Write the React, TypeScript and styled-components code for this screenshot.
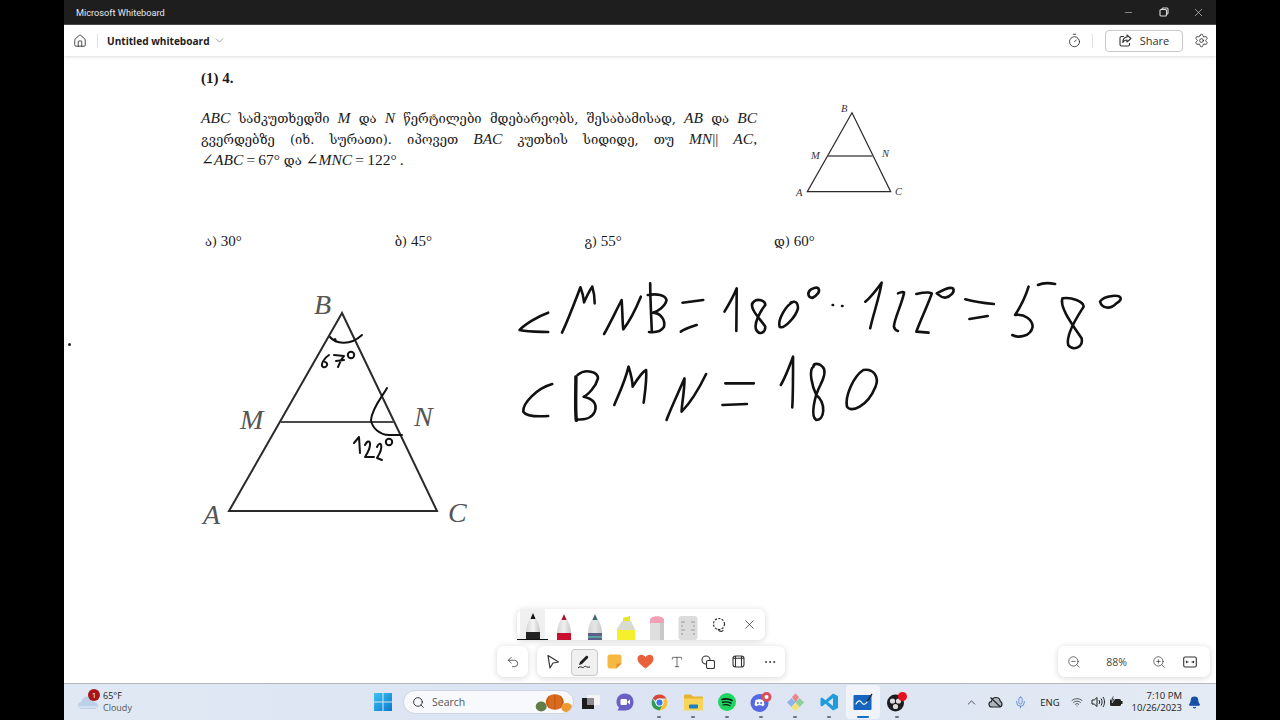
import React from 'react'
import styled, { createGlobalStyle } from 'styled-components'
import {
  Home,
  ChevronDown,
  ChevronUp,
  Timer,
  Settings,
  Minus,
  X,
  Undo2,
  Type,
  ZoomIn,
  ZoomOut,
  Ellipsis,
  Search,
  Mic,
  Wifi,
  Bell,
} from 'lucide-react'

const UI_FONT = `"Open Sans", "Noto Sans", sans-serif`
const BOOK_FONT = `"Liberation Serif", "DejaVu Serif", serif`

const GlobalStyle = createGlobalStyle`
  html, body {
    margin: 0;
    padding: 0;
    width: 1280px;
    height: 720px;
    overflow: hidden;
    background: #000;
  }
  * { box-sizing: border-box; }
`

const Desktop = styled.div`
  width: 1280px;
  height: 720px;
  display: flex;
  justify-content: center;
  background: #000;
`

const Screen = styled.div`
  width: 1152px;
  height: 720px;
  display: flex;
  flex-direction: column;
  font-family: ${UI_FONT};
  background: #fff;
`

const TitleBar = styled.div`
  height: 25px;
  flex: none;
  display: flex;
  align-items: center;
  padding-left: 12px;
  background: #1e1e1e;
  border-bottom: 1px solid #4a4a4a;
  color: #e8e8e8;
  font-family: Roboto, sans-serif;
  font-size: 9.2px;
`

const WindowControls = styled.div`
  margin-left: auto;
  display: flex;
  color: #dcdcdc;
`

const WindowButton = styled.div`
  width: 35px;
  height: 24px;
  display: flex;
  align-items: center;
  justify-content: center;
`

const AppBar = styled.div`
  height: 31px;
  flex: none;
  display: flex;
  align-items: center;
  padding-left: 9px;
  background: #fff;
  box-shadow: 0 1px 3px rgba(0, 0, 0, 0.14);
  position: relative;
  z-index: 2;
  color: #222;
`

const Divider = styled.div`
  width: 1px;
  height: 14px;
  margin-left: 10px;
  background: #e0e0e0;
`

const DocTitle = styled.div`
  margin-left: 9px;
  margin-right: 3px;
  font-size: 10.1px;
  font-weight: 700;
  color: #1c1c1c;
`

const BarRight = styled.div`
  margin-left: auto;
  display: flex;
  align-items: center;
  padding-right: 7px;
`

const ShareButton = styled.div`
  width: 78px;
  height: 22px;
  margin: 0 11px 0 12px;
  display: flex;
  align-items: center;
  justify-content: center;
  gap: 8px;
  border: 1px solid #c9c9c9;
  border-radius: 4px;
  font-size: 11px;
  color: #333;
`

const Canvas = styled.div`
  flex: 1;
  position: relative;
  background: #fff;
  overflow: hidden;
`

const QuestionImage = styled.div`
  position: absolute;
  left: 137px;
  top: 13px;
  width: 700px;
  font-family: ${BOOK_FONT};
  color: #1a1a1a;
`

const QuestionNumber = styled.div`
  font-size: 15px;
  font-weight: 700;
  line-height: 18px;
`

const QuestionText = styled.div`
  margin-top: 20px;
  width: 556px;
  font-size: 15.5px;
`

const TextLine = styled.div<{ $justify?: boolean }>`
  height: 21px;
  line-height: 21px;
  white-space: nowrap;
  text-align-last: ${(p) => (p.$justify ? 'justify' : 'left')};
`

const Var = styled.i`
  font-family: "Liberation Serif", serif;
  font-size: 15.5px;
`

const Geo = styled.span`
  font-family: "DejaVu Serif", "DejaVu Sans", "Noto Sans", serif;
  font-size: 13px;
`

const AnswerRow = styled.div`
  margin-top: 61px;
  margin-left: 4px;
  display: grid;
  grid-template-columns: repeat(4, 189.7px);
  font-size: 15px;
  line-height: 20px;
`

const InkLayer = styled.svg<{ $x: number; $y: number }>`
  position: absolute;
  left: ${(p) => p.$x}px;
  top: ${(p) => p.$y}px;
  overflow: visible;
`

const CursorDot = styled.div`
  position: absolute;
  left: 4px;
  top: 287px;
  width: 3px;
  height: 3px;
  border-radius: 50%;
  background: #222;
`

const FloatBar = styled.div<{ $left: number; $top: number; $width: number }>`
  position: absolute;
  left: ${(p) => p.$left}px;
  top: ${(p) => p.$top}px;
  width: ${(p) => p.$width}px;
  height: 31px;
  display: flex;
  align-items: center;
  background: #fff;
  border-radius: 7px;
  box-shadow: 0 1px 6px rgba(0, 0, 0, 0.16);
  color: #333;
`

const ToolCell = styled.div<{ $active?: boolean }>`
  width: 31px;
  height: 100%;
  flex: none;
  display: flex;
  align-items: center;
  justify-content: center;
  position: relative;

  ${(p) =>
    p.$active &&
    `
    &::before {
      content: '';
      position: absolute;
      left: 3px;
      top: 3px;
      width: 25px;
      height: 25px;
      background: #f0f0f0;
      border: 1px solid #c8c8c8;
      border-radius: 4px;
    }
    svg { position: relative; }
  `}
`

const PenCell = styled.div<{ $active?: boolean }>`
  width: 31px;
  height: 100%;
  flex: none;
  display: flex;
  align-items: flex-end;
  justify-content: center;
  overflow: hidden;
  position: relative;
  background: ${(p) => (p.$active ? 'linear-gradient(90deg, transparent 3px, #f0f0f0 3px, #f0f0f0 28px, transparent 28px)' : 'none')};
  border-bottom: ${(p) => (p.$active ? '1px solid #111' : 'none')};
`

const ZoomText = styled.div`
  width: 51px;
  text-align: center;
  font-size: 10.5px;
  color: #444;
`

const ZoomBarInner = styled.div`
  width: 100%;
  display: flex;
  align-items: center;
  gap: 10px;
  padding-left: 9px;
`

const FitSlot = styled.div`
  margin-left: 7px;
  display: flex;
`

const Taskbar = styled.div`
  height: 37px;
  flex: none;
  display: flex;
  align-items: center;
  background: linear-gradient(90deg, #e0e9f3 0%, #dce3f3 45%, #dee6f3 75%, #e4ebf4 100%);
  border-top: 1px solid #b4b8bd;
  color: #222;
`

const Weather = styled.div`
  width: 302px;
  flex: none;
  height: 100%;
  display: flex;
  align-items: center;
  padding-left: 14px;
  gap: 5px;
`

const WeatherIcon = styled.div`
  width: 20px;
  height: 24px;
  position: relative;
  display: flex;
  align-items: center;
`

const Badge = styled.div`
  position: absolute;
  right: -2px;
  top: -1px;
  width: 12px;
  height: 12px;
  border-radius: 50%;
  background: #a8141c;
  color: #fff;
  font-size: 8px;
  line-height: 12px;
  text-align: center;
`

const WeatherText = styled.div`
  font-size: 9px;
  line-height: 12.5px;
  color: #222;

  span {
    display: block;
    color: #555;
  }
`

const TaskCell = styled.div<{ $active?: boolean }>`
  width: 34px;
  height: 34px;
  flex: none;
  display: flex;
  align-items: center;
  justify-content: center;
  position: relative;
  border-radius: 4px;
  background: ${(p) => (p.$active ? 'rgba(255,255,255,0.55)' : 'none')};
`

const RunDot = styled.div<{ $active?: boolean }>`
  position: absolute;
  bottom: 1px;
  left: 50%;
  width: ${(p) => (p.$active ? 12 : 4)}px;
  height: 2px;
  margin-left: ${(p) => (p.$active ? -6 : -2)}px;
  border-radius: 1px;
  background: ${(p) => (p.$active ? '#1a6fc0' : '#6d7480')};
`

const SearchBox = styled.div`
  width: 171px;
  height: 24px;
  margin-left: 3px;
  flex: none;
  display: flex;
  align-items: center;
  gap: 7px;
  padding-left: 8px;
  background: #f7f9fc;
  border-radius: 12px;
  border: 1px solid #cfd5dd;
  font-size: 10.5px;
  color: #555;
  position: relative;
  overflow: hidden;
`

const SearchArt = styled.svg`
  position: absolute;
  right: 0;
  top: 0;
`

const Tray = styled.div`
  margin-left: auto;
  display: flex;
  align-items: center;
  padding-right: 12px;
  height: 100%;
`

const TrayCell = styled.div<{ $w: number }>`
  width: ${(p) => p.$w}px;
  flex: none;
  display: flex;
  align-items: center;
  justify-content: center;
  font-size: 9.5px;
  color: #222;
`

const Clock = styled.div`
  width: 59px;
  flex: none;
  text-align: right;
  font-size: 9.5px;
  line-height: 12.5px;
  color: #222;
  margin-right: 2px;
`

const strokeProps = {
  fill: 'none',
  stroke: '#111',
  strokeLinecap: 'round' as const,
  strokeLinejoin: 'round' as const,
}

const BookTriangle = () => (
  <InkLayer $x={128} $y={224} width={290} height={250} viewBox="0 0 290 250">
    <g fill="none" stroke="#2a2a2a" strokeWidth={2}>
      <path d="M150 33 L37 231 H245 Z" strokeLinejoin="miter" />
      <path d="M89 142 H202" stroke="#4a4a4a" strokeWidth={2.2} />
    </g>
    <g fontFamily="Liberation Serif, serif" fontStyle="italic" fontSize={28} fill="#555">
      <text x={122} y={34}>B</text>
      <text x={48} y={149}>M</text>
      <text x={222} y={146}>N</text>
      <text x={11} y={244}>A</text>
      <text x={256} y={242}>C</text>
    </g>
    <g {...strokeProps} strokeWidth={2}>
      <path d="M138 57 C143 63 157 67 170 55" />
      <path d="M143 59 L143.5 59.5" />
      <path d="M137 75 C132 78 128 85 131 87 C135 88 137 83 133 82" />
      <path d="M142 75 L152 76 C148 80 147 85 146 87 M144 81 L152 80" />
      <circle cx={159} cy={75} r={3.2} />
      <path d="M195 108 C190 117 180 128 179 140 C180 148 188 155 197 155 L210 155" />
      <path d="M162 163 L167 157 L168 173" />
      <path d="M173 165 C177 157 182 163 173 177 L182 177" />
      <path d="M185 167 C188 160 193 165 185 178 L190 180" />
      <circle cx={197} cy={162} r={3.2} />
    </g>
  </InkLayer>
)

const SmallTriangle = () => (
  <InkLayer $x={728} $y={44} width={120} height={100} viewBox="0 0 120 100">
    <g fill="none" stroke="#2a2a2a" strokeWidth={1.2}>
      <path d="M60 12.7 L15.3 91.7 H98.7 Z" />
      <path d="M36 56 H80.7" stroke="#555" strokeWidth={1.4} />
    </g>
    <g fontFamily="Liberation Serif, serif" fontStyle="italic" fontSize={10.5} fill="#333">
      <text x={49} y={12}>B</text>
      <text x={19} y={59}>M</text>
      <text x={90} y={57}>N</text>
      <text x={4} y={96}>A</text>
      <text x={103} y={95}>C</text>
    </g>
  </InkLayer>
)

// the ink coords were read off a crop that is squeezed sideways, so the box stretches unevenly
const WorkingInk = () => (
  <InkLayer $x={436} $y={214} width={640} height={160} viewBox="0 0 1568 480" preserveAspectRatio="none">
    <g {...strokeProps} strokeWidth={2.6}>
      {[
        'M118 128 C90 140 60 165 48 180 C70 186 95 185 118 186',
        'M152 188 C170 140 185 90 197 52 C203 70 205 85 206 97 C212 80 220 60 226 50 C230 65 232 85 232 100',
        'M255 192 C270 160 285 120 298 90 C300 120 300 160 302 178 C320 150 335 110 345 80',
        'M368 40 C368 80 370 130 372 185 M362 75 C385 70 405 75 408 90 C405 110 385 125 375 128 C395 130 405 150 402 170 C395 185 380 188 365 186',
        'M447 98 L498 90 M443 185 C455 175 470 170 482 165',
        'M550 125 C560 105 575 70 580 55 L579 183',
        'M622 95 C605 110 640 150 650 170 C650 190 635 195 628 180 C620 160 640 120 650 105 C650 90 630 85 622 95',
        'M720 95 C700 105 680 150 685 170 C695 180 725 140 730 115 C730 95 722 92 712 98',
        'M760 60 C752 70 755 82 765 84 C778 75 785 65 780 55 C775 50 765 55 760 60',
        'M815 105 L816 105 M838 108 L839 108',
        'M895 95 C910 80 925 55 935 38 C930 80 915 130 907 175',
        'M975 70 C985 65 990 65 990 68 C985 100 965 150 965 170 C967 178 972 182 975 183',
        'M1020 72 C1035 68 1050 65 1058 70 C1050 100 1030 150 1020 185 L1050 188',
        'M1070 70 C1085 60 1100 50 1110 55 C1115 65 1105 80 1090 83 C1080 82 1075 75 1070 70',
        'M1140 88 C1160 95 1190 100 1210 102 M1150 147 L1195 138',
        'M1295 50 C1285 90 1270 120 1262 135 C1285 130 1305 150 1305 170 C1300 200 1270 205 1255 195 M1318 45 C1330 38 1345 38 1360 42',
        'M1378 85 C1370 110 1400 160 1425 205 C1430 230 1405 245 1392 225 C1385 190 1420 130 1430 110 C1430 95 1400 80 1378 85',
        'M1470 95 C1475 115 1495 120 1510 100 C1530 85 1520 75 1500 78 C1485 80 1475 85 1470 95',
        'M128 342 C90 355 55 400 57 425 C65 440 95 440 118 438',
        'M185 320 C185 360 183 420 186 452 M187 320 C187 360 185 420 188 452',
        'M190 315 C210 295 240 305 240 325 C235 350 215 375 205 380 C225 385 240 400 232 425 C225 445 205 450 188 448',
        'M280 405 C290 375 305 340 315 290 C320 310 325 330 325 350 C335 330 350 305 358 300 C360 330 355 370 352 398',
        'M408 450 C420 410 440 360 452 325 C452 370 445 400 445 425 C465 400 490 350 505 312',
        'M552 340 L622 340 M545 405 L605 402',
        'M688 345 C700 320 710 285 718 260 C718 320 718 380 716 412',
        'M768 290 C755 300 765 350 775 375 C800 400 795 450 775 450 C760 440 770 380 785 345 C795 320 800 300 790 290 C780 278 768 280 768 290',
        'M890 300 C865 320 845 380 850 410 C860 430 900 410 920 350 C930 320 915 295 890 300',
      ].map((d) => (
        <path key={d} d={d} vectorEffect="non-scaling-stroke" />
      ))}
    </g>
  </InkLayer>
)

const Pen = ({ tip, body, band, low }: { tip: string; body: string; band: string; low?: string }) => (
  <svg width={20} height={27} viewBox="0 0 20 27">
    <defs>
      <linearGradient id={`pen-${tip.slice(1)}`} x1="0" x2="1" y1="0" y2="0">
        <stop offset="0" stopColor="#d4d4d4" />
        <stop offset="0.5" stopColor={body} />
        <stop offset="1" stopColor="#c8c8c8" />
      </linearGradient>
    </defs>
    <path d="M10 2 C13 5 17 13 17 20 V27 H3 V20 C3 13 7 5 10 2 Z" fill={`url(#pen-${tip.slice(1)})`} />
    <path d="M10 1 L12.5 7 H7.5 Z" fill={tip} />
    <rect x={3} y={20} width={14} height={7} fill={band} />
    {low && <rect x={3} y={23} width={14} height={2} fill={low} />}
  </svg>
)

const Highlighter = () => (
  <svg width={20} height={27} viewBox="0 0 20 27">
    <path d="M7 5 L14 3 V8 H7 Z" fill="#e8e620" />
    <path d="M6 8 H15 L19 16 V27 H1 V16 Z" fill="#d8dcd0" />
    <rect x={1} y={17} width={18} height={10} fill="#f4f02c" />
  </svg>
)

const Eraser = () => (
  <svg width={16} height={27} viewBox="0 0 16 27">
    <path d="M1 7 C1 2 15 2 15 7 V10 H1 Z" fill="#f2a0b4" />
    <rect x={1} y={10} width={14} height={17} fill="#dedede" />
    <rect x={11} y={10} width={4} height={17} fill="#c8c8c8" />
  </svg>
)

const Ruler = () => (
  <svg width={20} height={24} viewBox="0 0 20 24">
    <rect x={0.5} y={0} width={19} height={24} rx={3} fill="#dcdcdc" />
    <path d="M3 6 H7 M3 10 H5 M3 14 H7 M3 18 H5 M17 6 H13 M17 10 H15 M17 14 H13 M17 18 H15" stroke="#999" strokeWidth={1} />
  </svg>
)

const Lasso = () => (
  <svg width={16} height={16} viewBox="0 0 16 16" fill="none" stroke="#333" strokeWidth={1.2}>
    <circle cx={8} cy={7} r={5.5} strokeDasharray="2.2 1.3" />
    <path d="M7 12 C8 15 12 15 12 13" />
  </svg>
)

const CursorIcon = () => (
  <svg width={14} height={15} viewBox="0 0 14 15" fill="none" stroke="#333" strokeWidth={1.2} strokeLinejoin="round">
    <path d="M2 1.5 L12.5 8 L7 9 L4 14 Z" />
  </svg>
)

const InkPenIcon = () => (
  <svg width={16} height={16} viewBox="0 0 16 16" fill="none">
    <path d="M3 11 L4 8 L10 2 C11 1 13 3 12 4 L6 10 Z" fill="#1c1c1c" />
    <path d="M2 14 C5 11 6 15 8 13 C10 11 10 14 14 13" stroke="#1c1c1c" strokeWidth={1} />
  </svg>
)

const NoteIcon = () => (
  <svg width={15} height={15} viewBox="0 0 15 15">
    <path d="M3 0.5 H12 C13.5 0.5 14.5 1.5 14.5 3 V9.5 L9.5 14.5 H3 C1.5 14.5 0.5 13.5 0.5 12 V3 C0.5 1.5 1.5 0.5 3 0.5 Z" fill="#f5b942" />
    <path d="M9.5 14.5 V11 C9.5 10 10 9.5 11 9.5 H14.5 Z" fill="#e58b3a" />
  </svg>
)

const HeartIcon = () => (
  <svg width={17} height={15} viewBox="0 0 17 15">
    <path d="M8.5 14.5 C4 11 0.5 8.5 0.5 4.8 C0.5 2.3 2.4 0.8 4.5 0.8 C6.2 0.8 7.6 1.7 8.5 3.2 C9.4 1.7 10.8 0.8 12.5 0.8 C14.6 0.8 16.5 2.3 16.5 4.8 C16.5 8.5 13 11 8.5 14.5 Z" fill="#e8603c" />
  </svg>
)

const ShapesIcon = () => (
  <svg width={14} height={14} viewBox="0 0 14 14" fill="none" stroke="#333" strokeWidth={1.1}>
    <circle cx={5} cy={5} r={4} />
    <rect x={5.5} y={5.5} width={8} height={8} rx={1.5} fill="#fff" />
  </svg>
)

const FrameIcon = () => (
  <svg width={13} height={13} viewBox="0 0 13 13" fill="none" stroke="#333" strokeWidth={1.1}>
    <rect x={1} y={1} width={11} height={11} rx={2.5} />
    <path d="M3.5 1 V12 M9.5 1 V12 M1 3.2 H12" />
  </svg>
)

const FitIcon = () => (
  <svg width={14} height={12} viewBox="0 0 14 12" fill="none" stroke="#333" strokeWidth={1.1}>
    <rect x={0.7} y={1} width={12.6} height={10} rx={1.5} />
    <path d="M3 6 H5.5 M3 6 L4 5 M3 6 L4 7 M11 6 H8.5 M11 6 L10 5 M11 6 L10 7" />
  </svg>
)

const RestoreIcon = () => (
  <svg width={10} height={10} viewBox="0 0 10 10" fill="none" stroke="#dcdcdc" strokeWidth={1.1}>
    <rect x={1} y={2.5} width={6.5} height={6.5} rx={1} />
    <path d="M3 2.5 V2 C3 1.3 3.4 1 4 1 H8 C8.6 1 9 1.4 9 2 V6 C9 6.6 8.7 7 8 7" />
  </svg>
)

const ShareIcon = () => (
  <svg width={13} height={13} viewBox="0 0 13 13" fill="none" stroke="#333" strokeWidth={1.1} strokeLinejoin="round">
    <path d="M5 2.5 H2.5 C1.7 2.5 1 3.2 1 4 V10.5 C1 11.3 1.7 12 2.5 12 H9 C9.8 12 10.5 11.3 10.5 10.5 V9" />
    <path d="M8 1 L12 4.5 L8 8 V6 C6 6 4.5 7 3.8 8.5 C3.8 5.5 5.5 3.3 8 3 Z" />
  </svg>
)

const CloudIcon = () => (
  <svg width={20} height={16} viewBox="0 0 20 16">
    <path d="M4 15 C1.5 15 0 13.5 0 11.5 C0 9.5 1.5 8.3 3.2 8 C3.8 4.5 6.5 2.5 9.5 2.5 C13 2.5 15.5 5 16 8 C18.3 8.3 20 9.8 20 11.8 C20 13.8 18.3 15 16.5 15 Z" fill="#bcd0e6" />
    <path d="M1 13 H19" stroke="#e9f0f8" strokeWidth={1} />
  </svg>
)

const WindowsLogo = () => (
  <svg width={18} height={18} viewBox="0 0 18 18">
    <defs>
      <linearGradient id="winblue" x1="0" y1="0" x2="1" y2="1">
        <stop offset="0" stopColor="#3cc4f0" />
        <stop offset="1" stopColor="#0a78d0" />
      </linearGradient>
    </defs>
    <path d="M0 0 H8.5 V8.5 H0 Z M9.5 0 H18 V8.5 H9.5 Z M0 9.5 H8.5 V18 H0 Z M9.5 9.5 H18 V18 H9.5 Z" fill="url(#winblue)" />
  </svg>
)

const PumpkinArt = () => (
  <SearchArt width={40} height={22} viewBox="0 0 44 22">
    <ellipse cx={9} cy={16} rx={6} ry={5.5} fill="#5f7d45" />
    <ellipse cx={24} cy={11} rx={10} ry={8.5} fill="#d96a1e" />
    <path d="M24 3 V19 M18 4 C15 9 15 14 18 18 M30 4 C33 9 33 14 30 18" stroke="#b44f12" strokeWidth={0.8} fill="none" />
    <ellipse cx={37} cy={17} rx={6} ry={5} fill="#eb9a32" />
  </SearchArt>
)

const StoreIcon = () => (
  <svg width={18} height={14} viewBox="0 0 18 14">
    <rect x={5} y={0} width={13} height={10} fill="#f4f4f4" />
    <rect x={0} y={3} width={12} height={11} fill="#1c1c1c" />
    <rect x={5} y={3} width={7} height={7} fill="#8d8d8d" />
  </svg>
)

const MeetIcon = () => (
  <svg width={18} height={18} viewBox="0 0 18 18">
    <path d="M9 0.5 C14 0.5 17.5 4 17.5 9 C17.5 14 14 17.5 9 17.5 H1.5 L3 14.5 C1.3 13 0.5 11 0.5 9 C0.5 4 4 0.5 9 0.5 Z" fill="#6a5fc4" />
    <rect x={4.5} y={6} width={6.5} height={6} rx={1.2} fill="#fff" />
    <path d="M11.5 8.5 L14 6.5 V11.5 L11.5 9.5 Z" fill="#fff" />
  </svg>
)

const ChromeIcon = () => (
  <svg width={19} height={19} viewBox="0 0 48 48">
    <path d="M24 4 A20 20 0 0 1 41.3 14 L24 14 A10 10 0 0 0 15 19.6 L6.7 14 A20 20 0 0 1 24 4 Z" fill="#db4437" />
    <path d="M41.3 14 A20 20 0 0 1 24 44 L32.7 29 A10 10 0 0 0 33 19 Z" fill="#fbc02d" />
    <path d="M24 44 A20 20 0 0 1 6.7 14 L15.3 29 A10 10 0 0 0 24 34 L32.7 29 Z" fill="#2e9d4f" />
    <circle cx={24} cy={24} r={10} fill="#fff" />
    <circle cx={24} cy={24} r={7.8} fill="#3b78e7" />
  </svg>
)

const FilesIcon = () => (
  <svg width={19} height={17} viewBox="0 0 19 17">
    <path d="M0 2 C0 1 0.6 0.5 1.5 0.5 H7 L9 2.5 H18 C18.6 2.5 19 3 19 3.5 V6 H0 Z" fill="#e5b431" />
    <path d="M0 4.5 H19 V15.5 C19 16.2 18.5 16.5 18 16.5 H1 C0.5 16.5 0 16.2 0 15.5 Z" fill="#f8d558" />
    <rect x={5} y={10.5} width={9} height={4} rx={1} fill="#1d7fc4" />
  </svg>
)

const SpotifyIcon = () => (
  <svg width={18} height={18} viewBox="0 0 18 18" fill="none">
    <circle cx={9} cy={9} r={9} fill="#1ed760" />
    <path d="M4 6.5 C7.5 5.5 11 5.8 14 7.5" stroke="#121212" strokeWidth={1.6} strokeLinecap="round" />
    <path d="M4.5 9.3 C7.5 8.5 10.5 8.8 13 10.2" stroke="#121212" strokeWidth={1.4} strokeLinecap="round" />
    <path d="M5 12 C7.5 11.3 10 11.6 12 12.8" stroke="#121212" strokeWidth={1.2} strokeLinecap="round" />
  </svg>
)

const DiscordIcon = () => (
  <svg width={22} height={20} viewBox="0 0 22 20">
    <circle cx={9.5} cy={11} r={9} fill="#5568e0" />
    <path d="M5.5 8 C8 7 11 7 13.5 8 L14.5 13 C13.5 14 12.5 14.2 12 14.2 L11.5 13.2 H7.5 L7 14.2 C6.5 14.2 5.5 14 4.5 13 Z" fill="#fff" />
    <circle cx={7.8} cy={11} r={1.1} fill="#5568e0" />
    <circle cx={11.2} cy={11} r={1.1} fill="#5568e0" />
    <circle cx={16.5} cy={5} r={5} fill="#d8505a" />
    <circle cx={16.5} cy={5} r={2} fill="#fff" />
  </svg>
)

const GemIcon = () => (
  <svg width={19} height={19} viewBox="0 0 19 19">
    <path d="M9.5 0.5 L13 4 L9.5 9.5 L6 4 Z" fill="#e8858a" />
    <path d="M1 9.5 L5.5 5 L9.5 9.5 L5.5 14 Z" fill="#8fb2e8" />
    <path d="M18 9.5 L13.5 5 L9.5 9.5 L13.5 14 Z" fill="#8fcf9a" />
    <path d="M9.5 18.5 L5.5 14 L9.5 9.5 L13.5 14 Z" fill="#f2e27a" />
  </svg>
)

const VsCodeIcon = () => (
  <svg width={18} height={18} viewBox="0 0 18 18">
    <path d="M13 0.5 L18 3 V15 L13 17.5 L5.5 10.7 L2 13.5 L0.5 12.5 V5.5 L2 4.5 L5.5 7.3 Z M13 5 L8 9 L13 13 Z" fill="#1f9cdc" fillRule="evenodd" />
  </svg>
)

const BoardIcon = () => (
  <svg width={20} height={20} viewBox="0 0 20 20" fill="none">
    <rect x={0.5} y={3} width={18} height={15} rx={1} fill="#1464c0" />
    <path d="M3 12 C5 8 7 8 9 11 C10.5 13 12 13 15 9" stroke="#fff" strokeWidth={1.2} strokeLinecap="round" />
    <path d="M13.5 9 L18.5 1.5 L19.5 2.2 L15 10 Z" fill="#1c2a3c" />
  </svg>
)

const ObsIcon = () => (
  <svg width={22} height={20} viewBox="0 0 22 20">
    <circle cx={9.5} cy={11} r={8.5} fill="#1c1c1c" />
    <circle cx={6.5} cy={9} r={2.6} fill="#dcdcdc" />
    <circle cx={12.5} cy={9} r={2.6} fill="#dcdcdc" />
    <circle cx={9.5} cy={14.5} r={2.6} fill="#dcdcdc" />
    <circle cx={16.5} cy={4.5} r={4.5} fill="#e8101e" />
  </svg>
)

const CloudOffIcon = () => (
  <svg width={15} height={12} viewBox="0 0 15 12" fill="none" stroke="#222" strokeWidth={1.2}>
    <path d="M4 11 C2 11 1 9.8 1 8.3 C1 6.8 2 5.8 3.3 5.7 C3.8 3 5.5 1.5 7.8 1.5 C10.2 1.5 12 3.2 12.3 5.4 C13.5 5.8 14 6.8 14 8 C14 9.8 12.8 11 11 11 Z" fill="#aeb6c0" />
    <path d="M2.5 1.5 L12.5 11" />
  </svg>
)

const VolumeIcon = () => (
  <svg width={14} height={12} viewBox="0 0 14 12" fill="none" stroke="#222" strokeWidth={1}>
    <path d="M1 4 H3.2 L6 1.5 V10.5 L3.2 8 H1 Z" />
    <path d="M8 4 C8.8 5.2 8.8 6.8 8 8 M10 2.5 C11.5 4.5 11.5 7.5 10 9.5 M12 1 C14 4 14 8 12 11" />
  </svg>
)

const BatteryIcon = () => (
  <svg width={14} height={12} viewBox="0 0 14 12">
    <rect x={1} y={3} width={11} height={7} rx={1.5} fill="#222" />
    <rect x={12} y={5} width={1.5} height={3} fill="#222" />
    <path d="M4 0 L2 4 H4 L3 7 L6 3 H4.2 L5 0 Z" fill="#222" stroke="#dfe6f2" strokeWidth={0.6} />
  </svg>
)

export default function App() {
  return (
    <Desktop>
      <GlobalStyle />
      <Screen>
        <TitleBar>
          Microsoft Whiteboard
          <WindowControls>
            <WindowButton><Minus size={11} strokeWidth={1.2} /></WindowButton>
            <WindowButton><RestoreIcon /></WindowButton>
            <WindowButton><X size={13} strokeWidth={1.2} /></WindowButton>
          </WindowControls>
        </TitleBar>

        <AppBar>
          <Home size={14} strokeWidth={1.4} />
          <Divider />
          <DocTitle>Untitled whiteboard</DocTitle>
          <ChevronDown size={13} strokeWidth={1} color="#555" />
          <BarRight>
            <Timer size={15} strokeWidth={1.3} />
            <Divider />
            <ShareButton>
              <ShareIcon />
              Share
            </ShareButton>
            <Settings size={15} strokeWidth={1.3} />
          </BarRight>
        </AppBar>

        <Canvas>
          <QuestionImage>
            <QuestionNumber>(1) 4.</QuestionNumber>
            <QuestionText>
              <TextLine $justify>
                <Var>ABC</Var> <Geo>სამკუთხედში</Geo> <Var>M</Var> <Geo>და</Geo> <Var>N</Var>{' '}
                <Geo>წერტილები მდებარეობს, შესაბამისად,</Geo> <Var>AB</Var> <Geo>და</Geo> <Var>BC</Var>
              </TextLine>
              <TextLine $justify>
                <Geo>გვერდებზე (იხ. სურათი). იპოვეთ</Geo> <Var>BAC</Var> <Geo>კუთხის სიდიდე, თუ</Geo>{' '}
                <Var>MN</Var>|| <Var>AC</Var>,
              </TextLine>
              <TextLine>
                ∠<Var>ABC</Var>{'\u2009'}={'\u2009'}67° <Geo>და</Geo> ∠<Var>MNC</Var>{'\u2009'}={'\u2009'}122°{'\u2009'}.
              </TextLine>
            </QuestionText>
            <AnswerRow>
              <div><Geo>ა)</Geo> 30°</div>
              <div><Geo>ბ)</Geo> 45°</div>
              <div><Geo>გ)</Geo> 55°</div>
              <div><Geo>დ)</Geo> 60°</div>
            </AnswerRow>
          </QuestionImage>

          <SmallTriangle />
          <BookTriangle />
          <WorkingInk />
          <CursorDot />

          <FloatBar $left={453} $top={553} $width={248}>
            <PenCell $active><Pen tip="#111111" body="#f4f4f4" band="#222222" /></PenCell>
            <PenCell><Pen tip="#a8142c" body="#f0f0f0" band="#c8102e" /></PenCell>
            <PenCell><Pen tip="#3a6a78" body="#e6e6e6" band="#5b5f8a" low="#5aa0a0" /></PenCell>
            <PenCell><Highlighter /></PenCell>
            <PenCell><Eraser /></PenCell>
            <PenCell><Ruler /></PenCell>
            <ToolCell><Lasso /></ToolCell>
            <ToolCell><X size={15} strokeWidth={1.2} /></ToolCell>
          </FloatBar>

          <FloatBar $left={433} $top={590} $width={31}>
            <ToolCell><Undo2 size={14} strokeWidth={1.3} /></ToolCell>
          </FloatBar>

          <FloatBar $left={473} $top={590} $width={248}>
            <ToolCell><CursorIcon /></ToolCell>
            <ToolCell $active><InkPenIcon /></ToolCell>
            <ToolCell><NoteIcon /></ToolCell>
            <ToolCell><HeartIcon /></ToolCell>
            <ToolCell><Type size={14} strokeWidth={1.2} /></ToolCell>
            <ToolCell><ShapesIcon /></ToolCell>
            <ToolCell><FrameIcon /></ToolCell>
            <ToolCell><Ellipsis size={14} strokeWidth={1.5} /></ToolCell>
          </FloatBar>

          <FloatBar $left={994} $top={590} $width={152}>
            <ZoomBarInner>
              <ZoomOut size={14} strokeWidth={1.2} />
              <ZoomText>88%</ZoomText>
              <ZoomIn size={14} strokeWidth={1.2} />
              <FitSlot><FitIcon /></FitSlot>
            </ZoomBarInner>
          </FloatBar>
        </Canvas>

        <Taskbar>
          <Weather>
            <WeatherIcon>
              <CloudIcon />
              <Badge>1</Badge>
            </WeatherIcon>
            <WeatherText>
              65°F
              <span>Cloudy</span>
            </WeatherText>
          </Weather>
          <TaskCell><WindowsLogo /></TaskCell>
          <SearchBox>
            <Search size={13} strokeWidth={1.6} color="#222" />
            Search
            <PumpkinArt />
          </SearchBox>
          <TaskCell><StoreIcon /></TaskCell>
          <TaskCell><MeetIcon /></TaskCell>
          <TaskCell><ChromeIcon /><RunDot /></TaskCell>
          <TaskCell><FilesIcon /><RunDot /></TaskCell>
          <TaskCell><SpotifyIcon /><RunDot /></TaskCell>
          <TaskCell><DiscordIcon /><RunDot /></TaskCell>
          <TaskCell><GemIcon /><RunDot /></TaskCell>
          <TaskCell><VsCodeIcon /><RunDot /></TaskCell>
          <TaskCell $active><BoardIcon /><RunDot $active /></TaskCell>
          <TaskCell><ObsIcon /><RunDot /></TaskCell>
          <Tray>
            <TrayCell $w={24}><ChevronUp size={13} strokeWidth={1.4} /></TrayCell>
            <TrayCell $w={24}><CloudOffIcon /></TrayCell>
            <TrayCell $w={26}><Mic size={13} strokeWidth={1.3} color="#3a6fc4" /></TrayCell>
            <TrayCell $w={34}>ENG</TrayCell>
            <TrayCell $w={20}><Wifi size={12} strokeWidth={1.4} /></TrayCell>
            <TrayCell $w={22}><VolumeIcon /></TrayCell>
            <TrayCell $w={14}><BatteryIcon /></TrayCell>
            <Clock>
              7:10 PM
              <br />
              10/26/2023
            </Clock>
            <TrayCell $w={20}><Bell size={13} fill="#1550a8" color="#1550a8" /></TrayCell>
          </Tray>
        </Taskbar>
      </Screen>
    </Desktop>
  )
}
